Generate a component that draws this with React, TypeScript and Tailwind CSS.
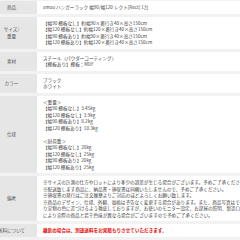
const rows: { label: string[]; lines: string[]; red?: boolean }[] = [
  { label: ["商品"], lines: ["smoo ハンガーラック 幅90/幅120 レクト[Rect] 1台"] },
  {
    label: ["サイズ/", "重量"],
    lines: [
      "【幅90 棚板なし】約幅90×奥行き40×高さ150cm",
      "【幅120 棚板なし】約幅120×奥行き40×高さ150cm",
      "【幅90 棚板あり】約幅90×奥行き40×高さ150cm",
      "【幅120 棚板あり】約幅120×奥行き40×高さ150cm",
    ],
  },
  { label: ["素材"], lines: ["スチール（パウダーコーティング）", "【棚板あり】棚板：MDF"] },
  { label: ["カラー"], lines: ["ブラック", "ホワイト"] },
  {
    label: ["仕様"],
    lines: [
      "＜重量＞",
      "【幅90 棚板なし】3.45kg",
      "【幅120 棚板なし】3.9kg",
      "【幅90 棚板あり】8.2kg",
      "【幅120 棚板あり】10.3kg",
      "",
      "＜耐荷重＞",
      "【幅90 棚板なし】20kg",
      "【幅120 棚板なし】25kg",
      "【幅90 棚板あり】20kg",
      "【幅120 棚板あり】25kg",
    ],
  },
  {
    label: ["備考"],
    lines: [
      "※サイズの計測の仕方やロットにより多少の誤差が生じる場合がございます。予めご了承ください。",
      "※配送致します商品に、納品書・領収書は同梱いたしませんので、予めご了承ください。",
      "※領収書の発行はご注文履歴よりご対応のほどよろしくお願い致します。",
      "※商品のデザイン、仕様、外観、価格は予告なく変更する場合があります。また、商品写真はできる限",
      "り実物の色に近づけるよう徹底しておりますが、お使いのモニター設定、お部屋の照明、製造ロットの違い等",
      "により実際の商品と若干色味が異なる場合がございますので予めご了承ください。",
    ],
  },
  { label: ["送料について"], lines: ["離島の場合は、別途送料をお見積もりさせていただきます。"], red: true },
];

export default function App() {
  return (
    <div className="w-[240px] h-[240px] overflow-hidden bg-[#f2f2f2] font-['Noto_Sans_CJK_JP',sans-serif]">
      <div className="ml-[-14px] w-[400px] pt-[1px] flex flex-col gap-[3px]">
        {rows.map((r, i) => (
          <div key={i} className="flex bg-white">
            <div className="w-[51px] shrink-0 bg-[#e6e6e6] flex flex-col items-center justify-center text-[4.6px] leading-[7px] text-[#555] whitespace-nowrap">
              {r.label.map((l, j) => (
                <span key={j}>{l}</span>
              ))}
            </div>
            <div
              className={
                r.red
                  ? "pl-[6px] py-[3px] text-[4.6px] leading-[6.5px] whitespace-nowrap font-bold text-[#e60000]"
                  : "pl-[6px] py-[3px] text-[4.6px] leading-[6.5px] whitespace-nowrap text-[#444]"
              }
            >
              {r.lines.map((l, j) => (
                <div key={j} className="h-[6.5px]">
                  {l}
                </div>
              ))}
            </div>
          </div>
        ))}
      </div>
    </div>
  );
}
